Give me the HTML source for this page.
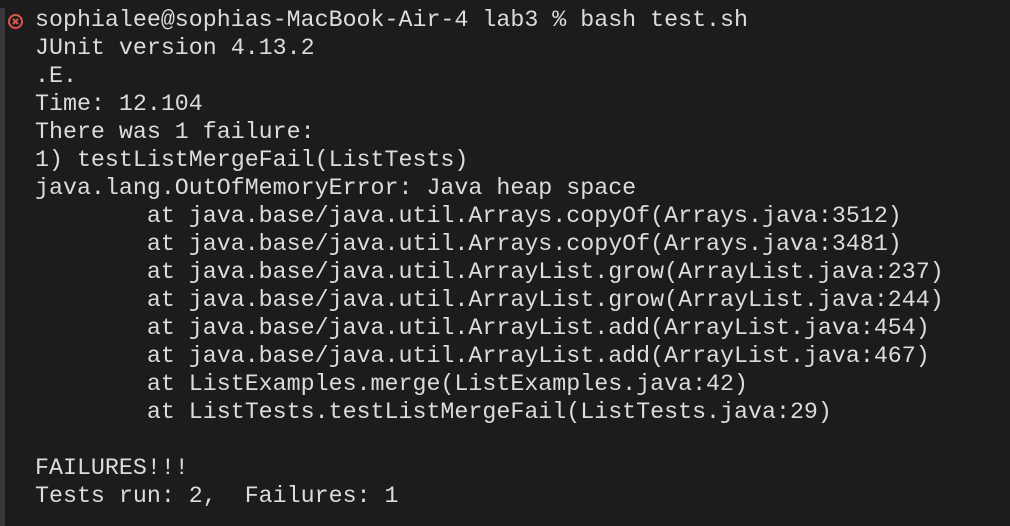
<!DOCTYPE html>
<html><head><meta charset="utf-8"><style>
html,body{margin:0;padding:0;background:#1c1c1c;width:1010px;height:526px;overflow:hidden}
.bar{position:absolute;left:0;top:8px;width:5px;height:518px;background:#38383b}
pre{position:absolute;left:35px;top:6px;margin:0;font-family:"Liberation Mono",monospace;font-size:23.3px;line-height:28px;color:#dcdcdc;tab-size:8}
svg{position:absolute;left:7px;top:13px}
</style></head><body>
<div class="bar"></div>
<svg width="17" height="17" viewBox="0 0 17 17"><circle cx="8.5" cy="8.5" r="6.5" fill="none" stroke="#e0544c" stroke-width="2"/><path d="M6 6L11 11M11 6L6 11" stroke="#e0544c" stroke-width="2"/></svg>
<pre>sophialee@sophias-MacBook-Air-4 lab3 % bash test.sh
JUnit version 4.13.2
.E.
Time: 12.104
There was 1 failure:
1) testListMergeFail(ListTests)
java.lang.OutOfMemoryError: Java heap space
        at java.base/java.util.Arrays.copyOf(Arrays.java:3512)
        at java.base/java.util.Arrays.copyOf(Arrays.java:3481)
        at java.base/java.util.ArrayList.grow(ArrayList.java:237)
        at java.base/java.util.ArrayList.grow(ArrayList.java:244)
        at java.base/java.util.ArrayList.add(ArrayList.java:454)
        at java.base/java.util.ArrayList.add(ArrayList.java:467)
        at ListExamples.merge(ListExamples.java:42)
        at ListTests.testListMergeFail(ListTests.java:29)

FAILURES!!!
Tests run: 2,  Failures: 1</pre>
</body></html>
